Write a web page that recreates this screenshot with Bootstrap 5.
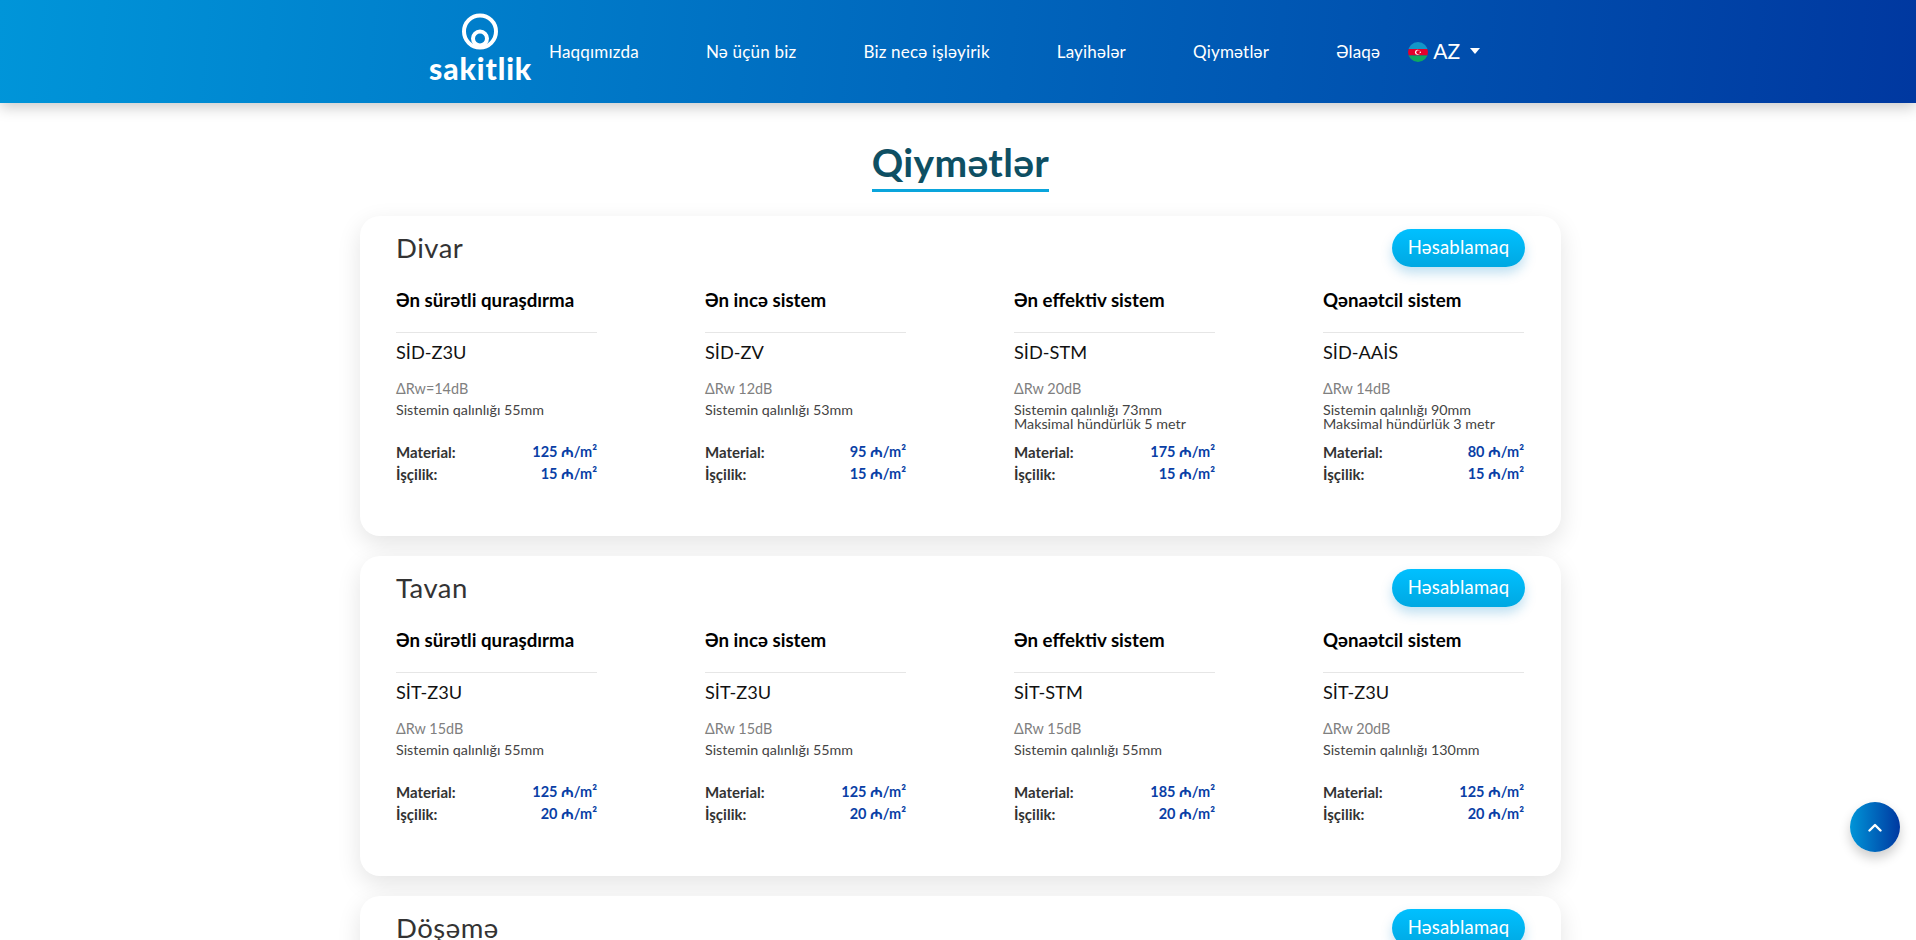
<!DOCTYPE html>
<html lang="az">
<head>
<meta charset="utf-8">
<title>Sakitlik</title>
<link href="https://cdn.jsdelivr.net/npm/bootstrap@5.3.0/dist/css/bootstrap.min.css" rel="stylesheet">
<style>
html,body{height:940px;overflow:hidden;background:#fff}
body{font-family:"Lato","Noto Sans",sans-serif;color:#222}
.topbar{height:103px;background:linear-gradient(95deg,#0095d9 0%,#0038a0 100%);box-shadow:0 4px 14px rgba(0,0,0,.22);padding:0 0 0 429px;position:relative}
.brand{width:102px;height:103px;padding-top:13px;color:#fff;text-decoration:none;line-height:1}
.brand svg{display:block;margin:0 auto}
.brand-word{display:block;font-size:30px;font-weight:900;letter-spacing:.9px;text-align:center;margin-top:3px;line-height:30px;white-space:nowrap}
.menu{gap:67px;margin-left:18px;height:103px}
.menu a{color:#fff;text-decoration:none;font-size:17px;letter-spacing:.2px;white-space:nowrap}
.lang{margin-left:28px;color:#fff;font-size:21px;gap:5px;height:103px;padding-bottom:2px}
.lang svg{margin-top:2px}
.lang-caret{width:0;height:0;border:5.5px solid transparent;border-top:6px solid #fff;border-bottom:0;margin-left:5px}
.page-title{font-size:39px;font-weight:700;color:#0e4f63;line-height:46px;padding-bottom:4px;border-bottom:3px solid #0aa5dc;letter-spacing:.35px;margin:0;height:53px}
.title-wrap{width:1201px;margin:0 0 25px 360px;padding-top:36px;height:88px}
.price-card{width:1201px;height:320px;margin:0 0 20px 360px;padding:13px 36px 0 36px;border:0;border-radius:20px;box-shadow:0 8px 24px rgba(0,0,0,.11)}
.card-name{font-size:27.5px;font-weight:400;color:#333;margin:0;line-height:38px;letter-spacing:.5px}
.calc{width:133px;height:38px;padding:0;border:0;border-radius:19px;font-size:18.5px;color:#fff;background:linear-gradient(180deg,#00c0ff,#00a8e2);box-shadow:0 6px 12px rgba(0,130,200,.25);letter-spacing:.2px}
.calc:hover{color:#fff}
.sys-grid{display:grid;grid-template-columns:repeat(4,201px);column-gap:108px;margin-top:22px}
.sys-title{font-size:18.7px;font-weight:700;color:#000;line-height:22px;padding-bottom:21px;border-bottom:1px solid #e6e6e6;margin:0 0 8px}
.sys-code{font-size:18.2px;line-height:22px;color:#111;margin:0 0 17px}
.sys-rw{font-size:14.4px;line-height:18px;color:#808080;margin:0 0 5px}
.sys-note{font-size:14.3px;line-height:14px;color:#444;height:32px;margin:0 0 6px}
.sys-price{font-size:14.5px;line-height:22px;font-weight:700;color:#333}
.sys-price span{font-size:15px}
.sys-price b{color:#0a3fa6;font-weight:700}
.to-top{position:fixed;left:1850px;top:802px;width:50px;height:50px;border:0;border-radius:50%;background:linear-gradient(90deg,#0095d8,#0038a0);box-shadow:0 6px 12px rgba(0,0,0,.2);padding:0}
</style>
</head>
<body>
<header class="topbar d-flex align-items-start">
  <a class="brand" href="#">
    <svg width="38" height="37" viewBox="0 0 38 37" aria-hidden="true">
      <circle cx="19" cy="18.5" r="16" fill="none" stroke="#fff" stroke-width="4"/>
      <circle cx="19" cy="25.5" r="7" fill="none" stroke="#fff" stroke-width="4"/>
    </svg>
    <span class="brand-word">sakitlik</span>
  </a>
  <nav class="menu d-flex align-items-center">
    <a href="#">Haqqımızda</a><a href="#">Nə üçün biz</a><a href="#">Biz necə işləyirik</a><a href="#">Layihələr</a><a href="#">Qiymətlər</a><a href="#">Əlaqə</a>
  </nav>
  <div class="lang d-flex align-items-center">
    <svg width="20" height="20" viewBox="0 0 20 20" aria-hidden="true">
      <defs><clipPath id="flagclip"><circle cx="10" cy="10" r="10"/></clipPath></defs>
      <g clip-path="url(#flagclip)">
        <rect width="20" height="7" fill="#1296c8"/><rect y="7" width="20" height="6.5" fill="#e4002b"/><rect y="13.5" width="20" height="6.5" fill="#0ea861"/>
        <circle cx="9.5" cy="10.2" r="2.5" fill="#fff"/><circle cx="10.3" cy="10.2" r="2" fill="#e4002b"/><circle cx="12.3" cy="10.2" r=".8" fill="#fff"/>
      </g>
    </svg>
    <span>AZ</span><span class="lang-caret"></span>
  </div>
</header>

<main>
  <div class="title-wrap d-flex justify-content-center"><h1 class="page-title">Qiymətlər</h1></div>

  <section class="card price-card">
    <div class="d-flex justify-content-between align-items-center"><h2 class="card-name">Divar</h2><button class="btn calc">Həsablamaq</button></div>
    <div class="sys-grid">
      <div><h3 class="sys-title">Ən sürətli quraşdırma</h3><p class="sys-code">SİD-Z3U</p><p class="sys-rw">ΔRw=14dB</p><p class="sys-note">Sistemin qalınlığı 55mm</p>
        <div class="sys-price d-flex justify-content-between"><span>Material:</span><b>125 ₼/m²</b></div><div class="sys-price d-flex justify-content-between"><span>İşçilik:</span><b>15 ₼/m²</b></div></div>
      <div><h3 class="sys-title">Ən incə sistem</h3><p class="sys-code">SİD-ZV</p><p class="sys-rw">ΔRw 12dB</p><p class="sys-note">Sistemin qalınlığı 53mm</p>
        <div class="sys-price d-flex justify-content-between"><span>Material:</span><b>95 ₼/m²</b></div><div class="sys-price d-flex justify-content-between"><span>İşçilik:</span><b>15 ₼/m²</b></div></div>
      <div><h3 class="sys-title">Ən effektiv sistem</h3><p class="sys-code">SİD-STM</p><p class="sys-rw">ΔRw 20dB</p><p class="sys-note">Sistemin qalınlığı 73mm<br>Maksimal hündürlük 5 metr</p>
        <div class="sys-price d-flex justify-content-between"><span>Material:</span><b>175 ₼/m²</b></div><div class="sys-price d-flex justify-content-between"><span>İşçilik:</span><b>15 ₼/m²</b></div></div>
      <div><h3 class="sys-title">Qənaətcil sistem</h3><p class="sys-code">SİD-AAİS</p><p class="sys-rw">ΔRw 14dB</p><p class="sys-note">Sistemin qalınlığı 90mm<br>Maksimal hündürlük 3 metr</p>
        <div class="sys-price d-flex justify-content-between"><span>Material:</span><b>80 ₼/m²</b></div><div class="sys-price d-flex justify-content-between"><span>İşçilik:</span><b>15 ₼/m²</b></div></div>
    </div>
  </section>

  <section class="card price-card">
    <div class="d-flex justify-content-between align-items-center"><h2 class="card-name">Tavan</h2><button class="btn calc">Həsablamaq</button></div>
    <div class="sys-grid">
      <div><h3 class="sys-title">Ən sürətli quraşdırma</h3><p class="sys-code">SİT-Z3U</p><p class="sys-rw">ΔRw 15dB</p><p class="sys-note">Sistemin qalınlığı 55mm</p>
        <div class="sys-price d-flex justify-content-between"><span>Material:</span><b>125 ₼/m²</b></div><div class="sys-price d-flex justify-content-between"><span>İşçilik:</span><b>20 ₼/m²</b></div></div>
      <div><h3 class="sys-title">Ən incə sistem</h3><p class="sys-code">SİT-Z3U</p><p class="sys-rw">ΔRw 15dB</p><p class="sys-note">Sistemin qalınlığı 55mm</p>
        <div class="sys-price d-flex justify-content-between"><span>Material:</span><b>125 ₼/m²</b></div><div class="sys-price d-flex justify-content-between"><span>İşçilik:</span><b>20 ₼/m²</b></div></div>
      <div><h3 class="sys-title">Ən effektiv sistem</h3><p class="sys-code">SİT-STM</p><p class="sys-rw">ΔRw 15dB</p><p class="sys-note">Sistemin qalınlığı 55mm</p>
        <div class="sys-price d-flex justify-content-between"><span>Material:</span><b>185 ₼/m²</b></div><div class="sys-price d-flex justify-content-between"><span>İşçilik:</span><b>20 ₼/m²</b></div></div>
      <div><h3 class="sys-title">Qənaətcil sistem</h3><p class="sys-code">SİT-Z3U</p><p class="sys-rw">ΔRw 20dB</p><p class="sys-note">Sistemin qalınlığı 130mm</p>
        <div class="sys-price d-flex justify-content-between"><span>Material:</span><b>125 ₼/m²</b></div><div class="sys-price d-flex justify-content-between"><span>İşçilik:</span><b>20 ₼/m²</b></div></div>
    </div>
  </section>

  <section class="card price-card">
    <div class="d-flex justify-content-between align-items-center"><h2 class="card-name">Döşəmə</h2><button class="btn calc">Həsablamaq</button></div>
  </section>
</main>

<button class="to-top d-flex align-items-center justify-content-center" aria-label="Yuxarı">
  <svg width="14" height="9" viewBox="0 0 14 9" aria-hidden="true"><path d="M1.5 7.5 7 2l5.5 5.5" fill="none" stroke="#fff" stroke-width="2.4" stroke-linecap="round" stroke-linejoin="round"/></svg>
</button>
<script src="https://cdn.jsdelivr.net/npm/bootstrap@5.3.0/dist/js/bootstrap.bundle.min.js"></script>
</body>
</html>
